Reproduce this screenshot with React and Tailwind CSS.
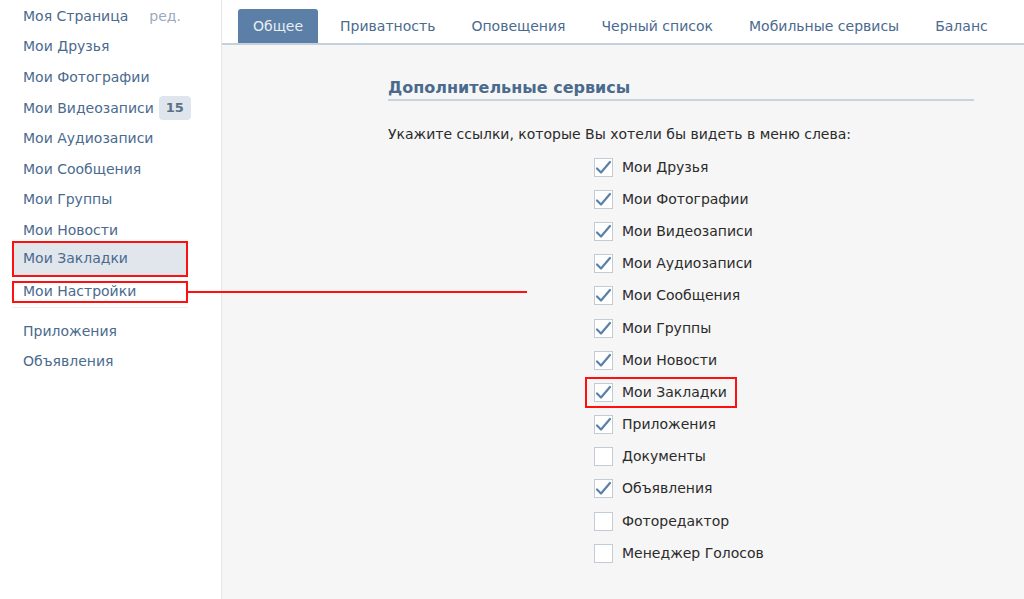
import React from "react";

const menu = [
  { label: "Моя Страница", extra: "ред." },
  { label: "Мои Друзья" },
  { label: "Мои Фотографии" },
  { label: "Мои Видеозаписи", badge: "15" },
  { label: "Мои Аудиозаписи" },
  { label: "Мои Сообщения" },
  { label: "Мои Группы" },
  { label: "Мои Новости" },
];

const tabs = ["Общее", "Приватность", "Оповещения", "Черный список", "Мобильные сервисы", "Баланс"];

const services = [
  { label: "Мои Друзья", on: true },
  { label: "Мои Фотографии", on: true },
  { label: "Мои Видеозаписи", on: true },
  { label: "Мои Аудиозаписи", on: true },
  { label: "Мои Сообщения", on: true },
  { label: "Мои Группы", on: true },
  { label: "Мои Новости", on: true },
  { label: "Мои Закладки", on: true, mark: true },
  { label: "Приложения", on: true },
  { label: "Документы", on: false },
  { label: "Объявления", on: true },
  { label: "Фоторедактор", on: false },
  { label: "Менеджер Голосов", on: false },
];

function Check({ on }) {
  return (
    <span className="flex h-[19px] w-[19px] items-center justify-center border border-[#c3ccd6] bg-white">
      {on && (
        <svg width="17" height="15" viewBox="0 0 17 15" fill="none">
          <path d="M2 8.5 L6 12.5 L15 2" stroke="#5b80a8" strokeWidth="2.2" strokeLinecap="round" strokeLinejoin="round" />
        </svg>
      )}
    </span>
  );
}

export default function App() {
  return (
    <div
      className="relative flex h-[599px] w-[1024px] overflow-hidden bg-white text-[14px] text-[#2b2b2b]"
      style={{ fontFamily: '"DejaVu Sans", "Liberation Sans", sans-serif' }}
    >
      {/* sidebar */}
      <div className="w-[222px] shrink-0 border-r border-[#e4e7eb] bg-white pt-[1px]">
        {menu.map((m) => (
          <div key={m.label} className="flex h-[30.6px] items-center pl-[23px] text-[#4a6a8e]">
            <span>{m.label}</span>
            {m.extra && <span className="ml-[21px] text-[#9aabbd]">{m.extra}</span>}
            {m.badge && (
              <span className="ml-[5px] rounded-[4px] bg-[#dfe5ec] px-[7px] py-[2px] text-[13px] font-bold text-[#5b6f85]">
                {m.badge}
              </span>
            )}
          </div>
        ))}
        <div className="-mt-[5px] ml-[12px] flex h-[36px] w-[176px] items-center border-2 border-[#ff1010] bg-[#e1e6ec] pl-[9px] text-[#4a6a8e]">
          Мои Закладки
        </div>
        <div className="ml-[12px] mt-[4px] flex h-[22px] w-[176px] items-center border-2 border-[#ff1010] bg-white pl-[9px] text-[#4a6a8e]">
          Мои Настройки
        </div>
        <div className="ml-[12px] mt-[4px] h-[1px] w-[176px] bg-[#eceff2]" />
        <div className="mt-[8px] flex h-[30.6px] items-center pl-[23px] text-[#4a6a8e]">Приложения</div>
        <div className="flex h-[30.6px] items-center pl-[23px] text-[#4a6a8e]">Объявления</div>
      </div>

      {/* right pane */}
      <div className="flex flex-1 flex-col">
        <div className="flex h-[45px] shrink-0 items-end border-b-2 border-[#c4d0dc] bg-white pl-[16px]">
          {tabs.map((t, i) =>
            i === 0 ? (
              <div
                key={t}
                className="mr-[4px] flex h-[34px] items-center rounded-t-[3px] bg-[#5b7fa6] px-[15px] text-[#e8eef4]"
              >
                {t}
              </div>
            ) : (
              <div key={t} className="flex h-[34px] items-center px-[18px] text-[#4a6a8e]">
                {t}
              </div>
            )
          )}
        </div>
        <div className="flex-1 bg-[#f6f6f6] pl-[166px] pr-[50px] pt-[33px]">
          <div className="border-b-2 border-[#c9d3de] pb-[1px] text-[16px] font-bold leading-[20px] text-[#4a6a8e]">
            Дополнительные сервисы
          </div>
          <div className="mt-[23px] text-[#2b2b2b]">Укажите ссылки, которые Вы хотели бы видеть в меню слева:</div>
          <div className="mt-[6px] ml-[206px] flex flex-col">
            {services.map((s) => (
              <div key={s.label} className="flex h-[32.2px] items-center">
                <div
                  className={
                    s.mark
                      ? "-ml-[9px] flex h-[31px] items-center gap-[9px] border-2 border-[#ff1010] pl-[7px] pr-[8px]"
                      : "flex items-center gap-[9px]"
                  }
                >
                  <Check on={s.on} />
                  <span>{s.label}</span>
                </div>
              </div>
            ))}
          </div>
        </div>
      </div>

      {/* connector line */}
      <div className="absolute left-[188px] top-[291px] h-[2px] w-[339px] bg-[#ff1010]" />
    </div>
  );
}
